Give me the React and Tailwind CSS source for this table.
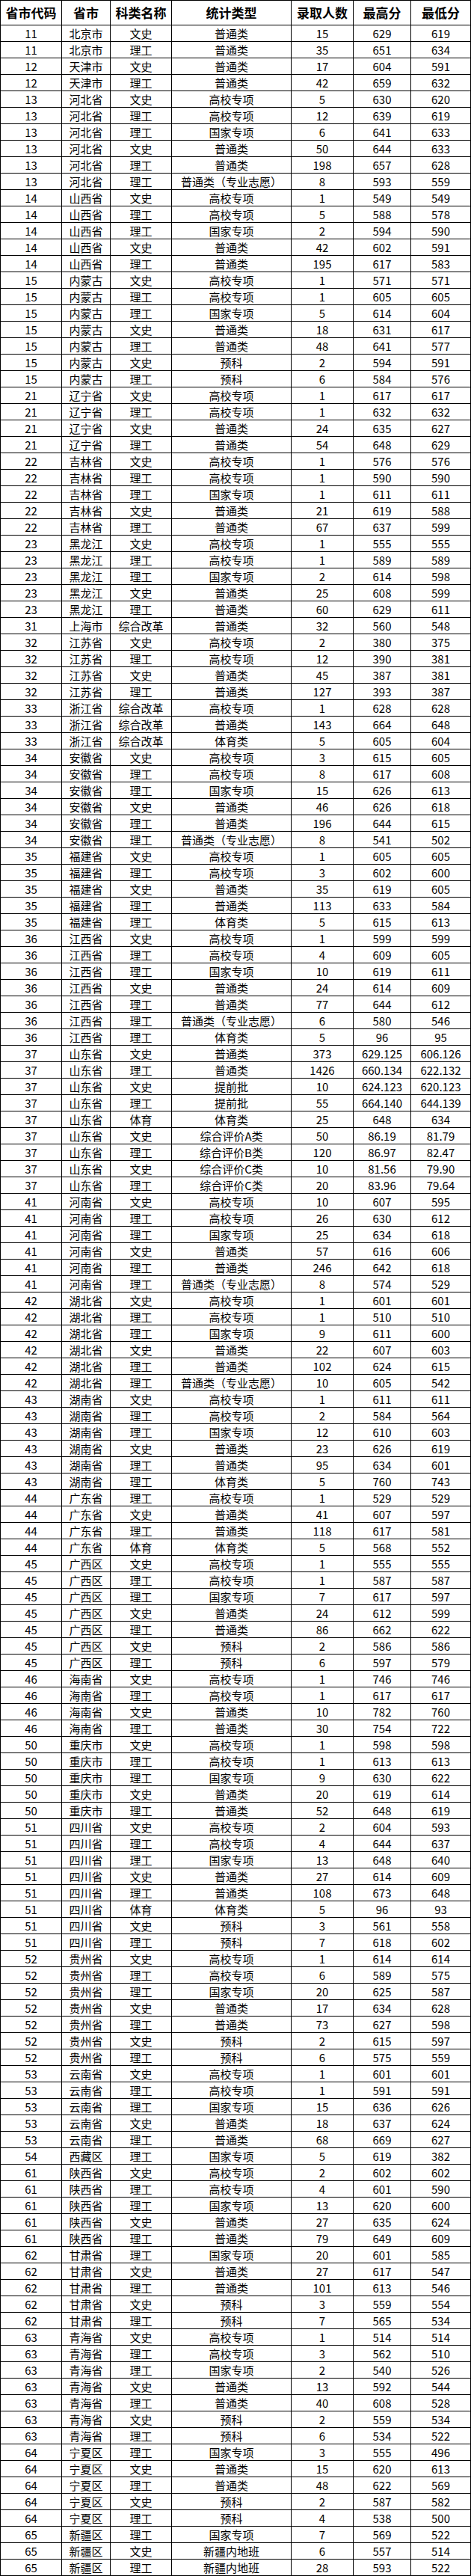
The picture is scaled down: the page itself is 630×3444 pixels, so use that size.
const PROV = {
  11: '北京市', 12: '天津市', 13: '河北省', 14: '山西省', 15: '内蒙古',
  21: '辽宁省', 22: '吉林省', 23: '黑龙江', 31: '上海市', 32: '江苏省',
  33: '浙江省', 34: '安徽省', 35: '福建省', 36: '江西省', 37: '山东省',
  41: '河南省', 42: '湖北省', 43: '湖南省', 44: '广东省', 45: '广西区',
  46: '海南省', 50: '重庆市', 51: '四川省', 52: '贵州省', 53: '云南省',
  54: '西藏区', 61: '陕西省', 62: '甘肃省', 63: '青海省', 64: '宁夏区',
  65: '新疆区',
}

const RAW = `11 文史 普通类 15 629 619
11 理工 普通类 35 651 634
12 文史 普通类 17 604 591
12 理工 普通类 42 659 632
13 文史 高校专项 5 630 620
13 理工 高校专项 12 639 619
13 理工 国家专项 6 641 633
13 文史 普通类 50 644 633
13 理工 普通类 198 657 628
13 理工 普通类（专业志愿） 8 593 559
14 文史 高校专项 1 549 549
14 理工 高校专项 5 588 578
14 理工 国家专项 2 594 590
14 文史 普通类 42 602 591
14 理工 普通类 195 617 583
15 文史 高校专项 1 571 571
15 理工 高校专项 1 605 605
15 理工 国家专项 5 614 604
15 文史 普通类 18 631 617
15 理工 普通类 48 641 577
15 文史 预科 2 594 591
15 理工 预科 6 584 576
21 文史 高校专项 1 617 617
21 理工 高校专项 1 632 632
21 文史 普通类 24 635 627
21 理工 普通类 54 648 629
22 文史 高校专项 1 576 576
22 理工 高校专项 1 590 590
22 理工 国家专项 1 611 611
22 文史 普通类 21 619 588
22 理工 普通类 67 637 599
23 文史 高校专项 1 555 555
23 理工 高校专项 1 589 589
23 理工 国家专项 2 614 598
23 文史 普通类 25 608 599
23 理工 普通类 60 629 611
31 综合改革 普通类 32 560 548
32 文史 高校专项 2 380 375
32 理工 高校专项 12 390 381
32 文史 普通类 45 387 381
32 理工 普通类 127 393 387
33 综合改革 高校专项 1 628 628
33 综合改革 普通类 143 664 648
33 综合改革 体育类 5 605 604
34 文史 高校专项 3 615 605
34 理工 高校专项 8 617 608
34 理工 国家专项 15 626 613
34 文史 普通类 46 626 618
34 理工 普通类 196 644 615
34 理工 普通类（专业志愿） 8 541 502
35 文史 高校专项 1 605 605
35 理工 高校专项 3 602 600
35 文史 普通类 35 619 605
35 理工 普通类 113 633 584
35 理工 体育类 5 615 613
36 文史 高校专项 1 599 599
36 理工 高校专项 4 609 605
36 理工 国家专项 10 619 611
36 文史 普通类 24 614 609
36 理工 普通类 77 644 612
36 理工 普通类（专业志愿） 6 580 546
36 理工 体育类 5 96 95
37 文史 普通类 373 629.125 606.126
37 理工 普通类 1426 660.134 622.132
37 文史 提前批 10 624.123 620.123
37 理工 提前批 55 664.140 644.139
37 体育 体育类 25 648 634
37 文史 综合评价A类 50 86.19 81.79
37 理工 综合评价B类 120 86.97 82.47
37 文史 综合评价C类 10 81.56 79.90
37 理工 综合评价C类 20 83.96 79.64
41 文史 高校专项 10 607 595
41 理工 高校专项 26 630 612
41 理工 国家专项 25 634 618
41 文史 普通类 57 616 606
41 理工 普通类 246 642 618
41 理工 普通类（专业志愿） 8 574 529
42 文史 高校专项 1 601 601
42 理工 高校专项 1 510 510
42 理工 国家专项 9 611 600
42 文史 普通类 22 607 603
42 理工 普通类 102 624 615
42 理工 普通类（专业志愿） 10 605 542
43 文史 高校专项 1 611 611
43 理工 高校专项 2 584 564
43 理工 国家专项 12 610 603
43 文史 普通类 23 626 619
43 理工 普通类 95 634 601
43 理工 体育类 5 760 743
44 理工 高校专项 1 529 529
44 文史 普通类 41 607 597
44 理工 普通类 118 617 581
44 体育 体育类 5 568 552
45 文史 高校专项 1 555 555
45 理工 高校专项 1 587 587
45 理工 国家专项 7 617 597
45 文史 普通类 24 612 599
45 理工 普通类 86 662 622
45 文史 预科 2 586 586
45 理工 预科 6 597 579
46 文史 高校专项 1 746 746
46 理工 高校专项 1 617 617
46 文史 普通类 10 782 760
46 理工 普通类 30 754 722
50 文史 高校专项 1 598 598
50 理工 高校专项 1 613 613
50 理工 国家专项 9 630 622
50 文史 普通类 20 619 614
50 理工 普通类 52 648 619
51 文史 高校专项 2 604 593
51 理工 高校专项 4 644 637
51 理工 国家专项 13 648 640
51 文史 普通类 27 614 609
51 理工 普通类 108 673 648
51 体育 体育类 5 96 93
51 文史 预科 3 561 558
51 理工 预科 7 618 602
52 文史 高校专项 1 614 614
52 理工 高校专项 6 589 575
52 理工 国家专项 20 625 587
52 文史 普通类 17 634 628
52 理工 普通类 73 627 598
52 文史 预科 2 615 597
52 理工 预科 6 575 559
53 文史 高校专项 1 601 601
53 理工 高校专项 1 591 591
53 理工 国家专项 15 636 626
53 文史 普通类 18 637 624
53 理工 普通类 68 669 627
54 理工 国家专项 5 619 382
61 文史 高校专项 2 602 602
61 理工 高校专项 4 601 590
61 理工 国家专项 13 620 600
61 文史 普通类 27 635 624
61 理工 普通类 79 649 609
62 理工 国家专项 20 601 585
62 文史 普通类 27 617 547
62 理工 普通类 101 613 546
62 文史 预科 3 559 554
62 理工 预科 7 565 534
63 文史 高校专项 1 514 514
63 理工 高校专项 3 562 510
63 理工 国家专项 2 540 526
63 文史 普通类 13 592 544
63 理工 普通类 40 608 528
63 文史 预科 2 559 534
63 理工 预科 6 534 522
64 理工 国家专项 3 555 496
64 文史 普通类 15 620 613
64 理工 普通类 48 622 569
64 文史 预科 2 587 582
64 理工 预科 4 538 500
65 理工 国家专项 7 569 522
65 文史 新疆内地班 6 557 514
65 理工 新疆内地班 28 593 522`

const rows = RAW.split('\n').map(line => {
  const [code, subject, type, count, max, min] = line.trim().split(' ')
  return [code, PROV[code], subject, type, count, max, min]
})

const HEAD = ['省市代码', '省市', '科类名称', '统计类型', '录取人数', '最高分', '最低分']

// column widths, first one is 1px short for the outer left border
const grid = 'grid grid-cols-[82px_65px_82px_160px_83px_77px_80px]'

export default function App() {
  return (
    <div
      className="w-[630px] bg-white border-l border-t border-black text-black"
      style={{ fontFamily: '"Noto Sans CJK SC", "Noto Sans", sans-serif' }}
    >
      <div className={`${grid} h-[33px]`}>
        {HEAD.map(h => (
          <div
            key={h}
            className="flex items-center justify-center border-r border-b border-black text-[17px] font-bold"
          >
            {h}
          </div>
        ))}
      </div>
      {rows.map((r, i) => (
        <div key={i} className={`${grid} h-[22px]`}>
          {r.map((c, j) => (
            <div
              key={j}
              className="flex items-center justify-center border-r border-b border-black text-[15px] leading-none whitespace-nowrap"
            >
              {c}
            </div>
          ))}
        </div>
      ))}
    </div>
  )
}
